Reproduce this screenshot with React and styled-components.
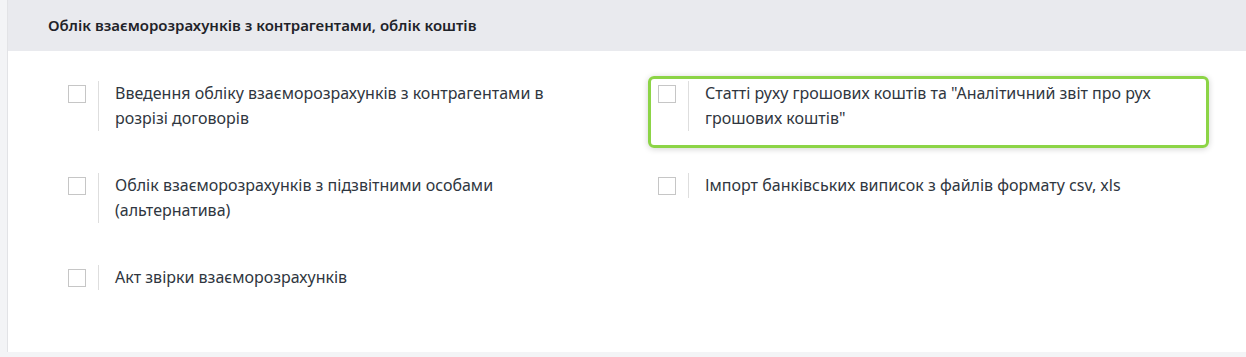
import React from 'react'
import styled, { createGlobalStyle } from 'styled-components'

const GlobalStyle = createGlobalStyle`
  html, body {
    margin: 0;
    padding: 0;
    background: #e8e9ed;
    font-family: 'Noto Sans', 'Open Sans', 'Liberation Sans', sans-serif;
  }
`

// Page frame
//
const Page = styled.div`
  display: flex;
  height: 357px;
  background: #f3f4f6;
`

const Panel = styled.div`
  flex: 1;
  margin-left: 7px;
  border-left: 1px solid #e2e3e6;
  display: flex;
  flex-direction: column;
  height: 352px;
`

const PanelHeader = styled.div`
  height: 51px;
  background: #e9eaee;
  display: flex;
  align-items: center;
  padding-left: 40px;
  padding-bottom: 2px;
  box-sizing: border-box;
  font-size: 15px;
  font-weight: 600;
  color: #1f2329;
`

const PanelBody = styled.div`
  flex: 1;
  background: #ffffff;
  padding: 25px 37px 0 50px;
  display: grid;
  grid-template-columns: 561px 561px;
  column-gap: 29px;
  row-gap: 20px;
  align-content: start;
`

// Option item
//
const Option = styled.label`
  display: flex;
  align-items: flex-start;
  height: 72px;
  box-sizing: border-box;
  padding: 2px 7px 13px 7px;
  border: 3px solid ${({ $active }) => ($active ? '#8cd446' : 'transparent')};
  border-radius: 6px;
  box-shadow: ${({ $active }) =>
    $active ? '0 1px 6px rgba(0, 0, 0, 0.18)' : 'none'};
  cursor: pointer;
`

const Box = styled.span`
  flex: none;
  width: 16px;
  height: 16px;
  margin-top: 4px;
  margin-right: 12px;
  border: 1px solid #c6c6c6;
  background: #fff;
`

const Label = styled.span`
  border-left: 1px solid #dedede;
  padding-left: 16px;
  max-width: ${({ $wrap }) => $wrap || 'none'};
  font-size: 16px;
  line-height: 25px;
  color: #2f3640;
`

const options = [
  {
    text: 'Введення обліку взаєморозрахунків з контрагентами в розрізі договорів',
    wrap: '445px',
  },
  {
    text: 'Статті руху грошових коштів та "Аналітичний звіт про рух грошових коштів"',
    wrap: '475px',
    active: true,
  },
  { text: 'Облік взаєморозрахунків з підзвітними особами (альтернатива)', wrap: '400px' },
  { text: 'Імпорт банківських виписок з файлів формату csv, xls' },
  { text: 'Акт звірки взаєморозрахунків' },
]

export default function App() {
  return (
    <>
      <GlobalStyle />
      <Page>
        <Panel>
          <PanelHeader>Облік взаєморозрахунків з контрагентами, облік коштів</PanelHeader>
          <PanelBody>
            {options.map((o) => (
              <Option key={o.text} $active={o.active}>
                <Box />
                <Label $wrap={o.wrap}>{o.text}</Label>
              </Option>
            ))}
          </PanelBody>
        </Panel>
      </Page>
    </>
  )
}
